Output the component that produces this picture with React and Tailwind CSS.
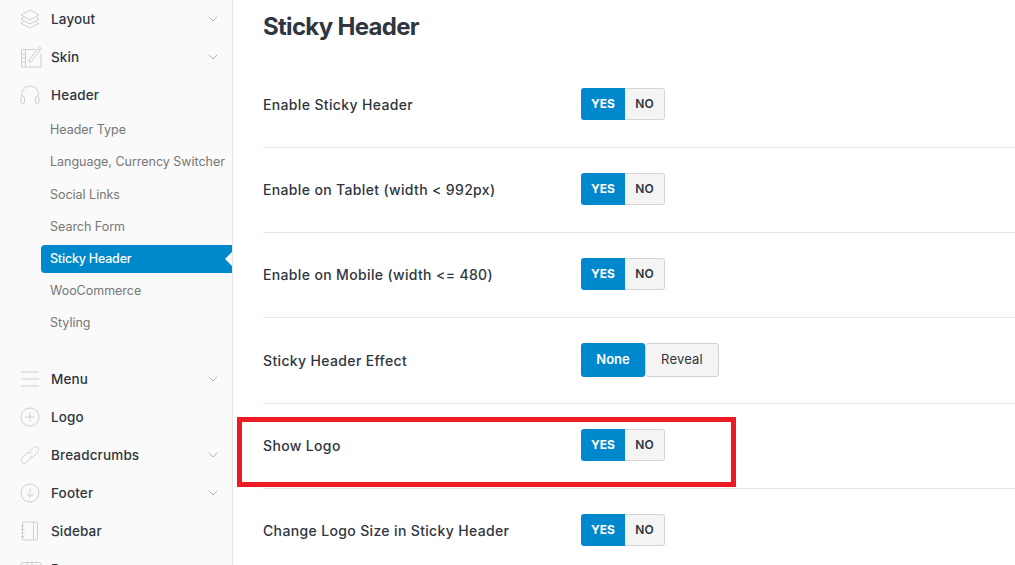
import React from 'react'
import { ChevronDown } from 'lucide-react'

const iconProps = {
  width: 20,
  height: 20,
  viewBox: '0 0 20 20',
  fill: 'none',
  stroke: '#cfcfcf',
  strokeWidth: 1,
}

const LayersIcon = () => (
  <svg {...iconProps}>
    <path d="M10 1 L19 6 L10 11 L1 6 Z" />
    <path d="M3.5 8.8 L1 10.2 L10 15 L19 10.2 L16.5 8.8" />
    <path d="M3.5 13 L1 14.4 L10 19 L19 14.4 L16.5 13" />
  </svg>
)

const SkinIcon = () => (
  <svg {...iconProps} width={22} height={22} viewBox="0 0 22 22">
    <path d="M15 3.5 H1.5 V21 H21 V7" />
    <path d="M5.5 3.5 V21" />
    <path d="M1.5 8 H5.5 M1.5 12 H5.5 M1.5 16 H5.5" />
    <path d="M9 14 L9 16 L11 16 L20 4 L18 2.5 Z" />
    <path d="M18 2.5 L19.5 0.8 L21 2.2 L20 4" />
  </svg>
)

const HeadphonesIcon = () => (
  <svg {...iconProps}>
    <path d="M1.5 11 V9.5 A8.5 8.5 0 0 1 18.5 9.5 V11" />
    <rect x="1" y="11" width="3.5" height="7.5" rx="1.7" />
    <rect x="15.5" y="11" width="3.5" height="7.5" rx="1.7" />
  </svg>
)

const MenuIcon = () => (
  <svg {...iconProps} strokeWidth={1.2}>
    <path d="M1 3 H19 M1 10 H19 M1 17 H19" />
  </svg>
)

const PlusCircleIcon = () => (
  <svg {...iconProps}>
    <circle cx="10" cy="10" r="9" />
    <path d="M10 5.5 V14.5 M5.5 10 H14.5" />
  </svg>
)

const LinkIcon = () => (
  <svg {...iconProps}>
    <path d="M8.2 8.3 L11.9 4.2 C13.3 2.4 15.4 0.8 17.4 2.3 C19.6 4.2 18.5 6.5 16.9 8 L13.5 11.6 C12.4 12.6 10.6 12.9 9.5 11.7" />
    <path d="M11.8 11.7 L8.1 15.8 C6.7 17.6 4.6 19.2 2.6 17.7 C0.4 15.8 1.5 13.5 3.1 12 L6.5 8.4 C7.6 7.4 9.4 7.1 10.5 8.3" />
  </svg>
)

const ArrowCircleIcon = () => (
  <svg {...iconProps}>
    <circle cx="10" cy="10" r="9" />
    <path d="M10 5.5 V14 M6.5 10.5 L10 14 L13.5 10.5" />
  </svg>
)

const NotebookIcon = () => (
  <svg {...iconProps}>
    <rect x="2.5" y="1" width="15" height="18" rx="1" />
    <path d="M13.5 1 V19" />
    <path d="M1 5 H4.5 M1 8.5 H4.5 M1 12 H4.5 M1 15.5 H4.5" />
  </svg>
)

const PagesIcon = () => (
  <svg {...iconProps} width={22} height={20} viewBox="0 0 22 20">
    <rect x="1" y="3.5" width="20" height="14" rx="1.5" />
    <path d="M1 7 H21 M7 3.5 V7 M12 3.5 V7" />
  </svg>
)

const menuTop = [
  { label: 'Layout', icon: <LayersIcon />, arrow: true },
  { label: 'Skin', icon: <SkinIcon />, arrow: true },
  { label: 'Header', icon: <HeadphonesIcon /> },
]

const menuBottom = [
  { label: 'Menu', icon: <MenuIcon />, arrow: true },
  { label: 'Logo', icon: <PlusCircleIcon /> },
  { label: 'Breadcrumbs', icon: <LinkIcon />, arrow: true },
  { label: 'Footer', icon: <ArrowCircleIcon />, arrow: true },
  { label: 'Sidebar', icon: <NotebookIcon /> },
  { label: 'Pages', icon: <PagesIcon />, arrow: true },
]

const subItems = [
  'Header Type',
  'Language, Currency Switcher',
  'Social Links',
  'Search Form',
  'Sticky Header',
  'WooCommerce',
  'Styling',
]

const rows = [
  { label: 'Enable Sticky Header' },
  { label: 'Enable on Tablet (width < 992px)' },
  { label: 'Enable on Mobile (width <= 480)' },
  { label: 'Sticky Header Effect', effect: true },
  { label: 'Show Logo' },
  { label: 'Change Logo Size in Sticky Header' },
]

const MenuRow = ({ item }) => (
  <div className="flex h-[38px] shrink-0 items-center pl-[20px] pr-[11px]">
    <span className="flex w-[31px] shrink-0 items-center">{item.icon}</span>
    <span className="flex-1 text-[13.5px] font-medium tracking-[0.15px] text-[#2f3640]">{item.label}</span>
    {item.arrow && <ChevronDown size={16} strokeWidth={1.5} className="text-[#b5b5b5]" />}
  </div>
)

const Sidebar = () => (
  <aside className="flex h-[565px] w-[233px] shrink-0 flex-col overflow-hidden border-r border-[#e5e5e5] bg-[#fafafa]">
    {menuTop.map((item) => (
      <MenuRow key={item.label} item={item} />
    ))}
    <div className="mt-[0.5px] mb-[20.1px] flex flex-col">
      {subItems.map((label) => {
        const active = label === 'Sticky Header'
        return (
          <div key={label} className="relative h-[32.2px] pl-[41px]">
            <div
              className={
                active
                  ? 'flex h-[28px] translate-y-[2px] items-center rounded-l-[4px] bg-[#0088cc] pl-[9px] text-[12.5px] font-medium tracking-[-0.2px] text-white'
                  : 'flex h-[32px] items-center pl-[9px] text-[12.5px] tracking-[-0.02px] whitespace-nowrap text-[#777777]'
              }
            >
              {label}
            </div>
            {active && (
              <span className="absolute top-[9px] right-0 h-0 w-0 border-y-[7px] border-r-[7px] border-y-transparent border-r-[#fafafa]" />
            )}
          </div>
        )
      })}
    </div>
    {menuBottom.map((item) => (
      <MenuRow key={item.label} item={item} />
    ))}
  </aside>
)

const YesNo = () => (
  <div className="flex h-[32px] w-[84px] text-[12px] font-semibold">
    <span className="flex w-[44px] items-center justify-center rounded-l-[3px] bg-[#0088cc] font-bold text-white">YES</span>
    <span className="flex w-[40px] items-center justify-center rounded-r-[3px] border border-l-0 border-[#d5d5d5] bg-[#f4f4f4] text-[#2f3640]">NO</span>
  </div>
)

const Effect = () => (
  <div className="flex h-[34px] w-[138px] text-[13px]">
    <span className="flex w-[64px] items-center justify-center rounded-[3px] bg-[#0088cc] font-semibold text-white">None</span>
    <span className="flex w-[74px] items-center justify-center rounded-[3px] border border-[#d0d0d0] bg-[#f4f4f4] tracking-[0.2px] text-[#2f3640]">Reveal</span>
  </div>
)

const Row = ({ row }) => (
  <div className={row.effect ? 'flex items-center border-b border-[#e7e7e7] pt-[25px] pb-[26px]' : 'flex items-center border-b border-[#e7e7e7] pt-[25px] pb-[27px]'}>
    <div className="w-[318px] shrink-0 text-[14px] font-medium tracking-[0.35px] text-[#2f3640]">{row.label}</div>
    {row.effect ? <Effect /> : <YesNo />}
  </div>
)

const App = () => (
  <div
    className="relative flex h-[565px] w-[1015px] overflow-hidden bg-white"
    style={{ fontFamily: 'Inter, "Open Sans", sans-serif' }}
  >
    <Sidebar />
    <main className="flex-1 pl-[30px]">
      <h1 className="flex h-[63px] items-center pb-[9px] text-[24px] font-bold tracking-[-0.7px] text-[#2f3640]">Sticky Header</h1>
      {rows.map((row) => (
        <Row key={row.label} row={row} />
      ))}
    </main>
    <div className="absolute top-[417px] left-[237px] h-[70px] w-[499px] border-[5px] border-[#ed1c24]" />
  </div>
)

export default App
